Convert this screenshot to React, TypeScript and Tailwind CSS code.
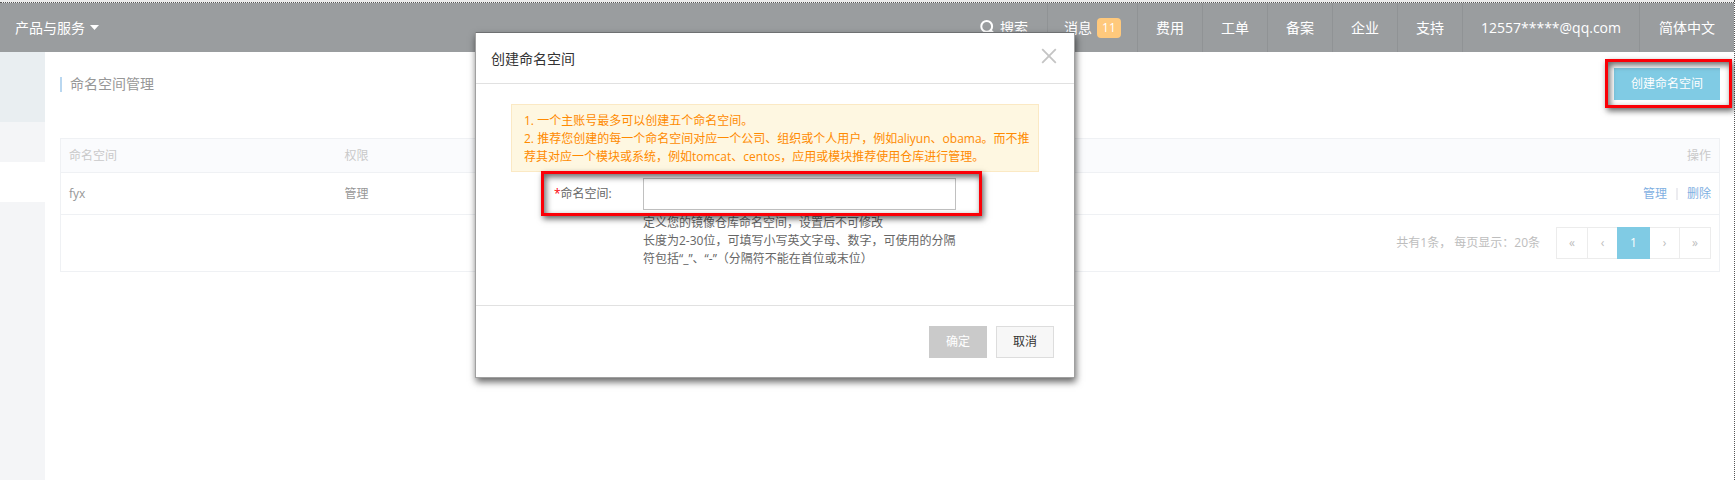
import React from "react";

const navItems = ["费用", "工单", "备案", "企业", "支持", "12557*****@qq.com"];

function Highlight({ className }: { className: string }) {
  return (
    <div
      aria-hidden="true"
      className={
        "pointer-events-none absolute border-3 border-[#fb0007] shadow-[2px_3px_6px_rgba(0,0,0,0.6),inset_2px_3px_6px_rgba(0,0,0,0.6)] " +
        className
      }
    />
  );
}

function TopBar() {
  return (
    <header>
      <div className="h-[3px] border-b border-dotted border-[#555] bg-[#ececec]" />
      <div className="flex h-[49px] items-stretch justify-between bg-[#9a9d9f] text-sm text-white">
        <button type="button" className="flex items-center gap-[5px] pl-[15px]">
          产品与服务
          <svg width="9" height="5" viewBox="0 0 9 5" aria-hidden="true">
            <path d="M0 0h9L4.5 5z" fill="#fff" />
          </svg>
        </button>
        <nav className="flex items-stretch">
          <a href="#search" className="flex items-center gap-[5px] border-r border-[#909395] px-[19px]">
            <svg width="15" height="15" viewBox="0 0 15 15" fill="none" stroke="#fff" aria-hidden="true">
              <circle cx="6.7" cy="6.4" r="5.4" strokeWidth="2" />
              <path d="M10.4 10.4l3.6 3.6" strokeWidth="2.6" />
            </svg>
            搜索
          </a>
          <a href="#messages" className="flex items-center gap-[5px] border-r border-[#909395] px-4">
            消息
            <span className="flex h-5 w-6 items-center justify-center rounded bg-[#ffc97c] text-xs">11</span>
          </a>
          {navItems.map((label) => (
            <a key={label} href="#nav" className="flex items-center border-r border-[#909395] px-[18px]">
              {label}
            </a>
          ))}
          <a href="#lang" className="flex items-center px-[19px]">
            简体中文
          </a>
        </nav>
      </div>
    </header>
  );
}

function Pagination() {
  const cell = "flex h-full items-center justify-center border-[#ececec] ";
  return (
    <div className="flex items-center justify-end gap-4 text-[#bdbdbd]">
      <span>共有1条， 每页显示：20条</span>
      <div className="flex h-8">
        <button type="button" aria-label="首页" className={cell + "w-8 border"}>«</button>
        <button type="button" aria-label="上一页" className={cell + "w-[29px] border-y"}>‹</button>
        <button type="button" className="h-full w-[33px] bg-[#80cbe4] text-white">1</button>
        <button type="button" aria-label="下一页" className={cell + "w-[29px] border-y"}>›</button>
        <button type="button" aria-label="末页" className={cell + "w-8 border"}>»</button>
      </div>
    </div>
  );
}

function NamespaceTable() {
  return (
    <table className="w-full border-collapse border border-[#eff1f4] text-left text-xs">
      <thead>
        <tr className="h-[34px] border-b border-[#eff1f4] bg-[#fafbfd] text-[#c9c9c9]">
          <th className="w-[276px] px-2 font-normal">命名空间</th>
          <th className="px-2 font-normal">权限</th>
          <th className="px-2 text-right font-normal">操作</th>
        </tr>
      </thead>
      <tbody>
        <tr className="h-[42px] border-b border-[#eff1f4] text-[#979797]">
          <td className="px-2">fyx</td>
          <td className="px-2">管理</td>
          <td className="px-2 text-[#7fb0e2]">
            <div className="flex items-center justify-end gap-[9px]">
              <a href="#manage">管理</a>
              <span className="h-3 w-[2px] bg-[#ececf0]" />
              <a href="#delete">删除</a>
            </div>
          </td>
        </tr>
      </tbody>
      <tfoot>
        <tr className="h-[57px]">
          <td colSpan={3} className="px-2">
            <Pagination />
          </td>
        </tr>
      </tfoot>
    </table>
  );
}

function CreateDialog() {
  return (
    <section
      role="dialog"
      aria-labelledby="dialog-title"
      className="absolute top-8 left-[475px] w-[600px] border border-[#a0a0a0] border-t-[#6e7072] bg-white shadow-[1px_4px_7px_rgba(0,0,0,0.6)]"
    >
      <div className="flex h-[51px] items-center justify-between border-b border-[#e1e1e1] pr-[17px] pl-[15px]">
        <h2 id="dialog-title" className="pt-[2px] text-sm text-[#333]">创建命名空间</h2>
        <button type="button" aria-label="关闭" className="pb-1">
          <svg width="16" height="16" viewBox="0 0 16 16" stroke="#c4c4c4" strokeWidth="1.8" aria-hidden="true">
            <path d="M1.2 1.2l13.6 13.6M14.8 1.2L1.2 14.8" />
          </svg>
        </button>
      </div>
      <div className="h-[222px] border-b border-[#e1e1e1] px-[35px] pt-5 text-xs leading-[18px]">
        <div className="border border-[#fbe9c4] bg-[#fef7e1] pt-[7px] pr-2 pb-[5px] pl-3 text-[#ff8a00]">
          <p>1. 一个主账号最多可以创建五个命名空间。</p>
          <p>
            2. 推荐您创建的每一个命名空间对应一个公司、组织或个人用户，例如aliyun、obama。而不推荐其对应一个模块或系统，例如tomcat、centos，应用或模块推荐使用仓库进行管理。
          </p>
        </div>
        <div className="relative mt-[6px] flex items-center pl-[43px]">
          <label htmlFor="namespace" className="w-[89px] text-[#666]">
            <span className="text-[#fb0007]">*</span>命名空间:
          </label>
          <input id="namespace" type="text" className="h-8 w-[313px] border border-[#c0c0c0] bg-white px-2 outline-none" />
          <Highlight className="-top-[7px] left-[30px] h-[45px] w-[441px]" />
        </div>
        <div className="mt-1 ml-[132px] w-[316px] text-[#666] [text-spacing-trim:space-all]">
          <p>定义您的镜像仓库命名空间，设置后不可修改</p>
          <p>长度为2-30位，可填写小写英文字母、数字，可使用的分隔符包括“_”、“-”（分隔符不能在首位或末位）</p>
        </div>
      </div>
      <div className="flex h-[71px] items-center justify-end gap-[9px] pr-5 text-xs">
        <button type="button" disabled className="h-8 w-[58px] bg-[#cacaca] text-white">确定</button>
        <button type="button" className="h-8 w-[58px] border border-[#ddd] bg-[#f7f7f7] text-[#333]">取消</button>
      </div>
    </section>
  );
}

export default function App() {
  return (
    <div className="relative flex min-h-screen flex-col border-r border-dotted border-[#555] bg-white font-['Open_Sans','Noto_Sans_CJK_SC',sans-serif]">
      <TopBar />
      <div className="flex flex-1">
        <aside className="flex w-[45px] shrink-0 flex-col bg-[#f4f5f7]">
          <div className="h-[70px] bg-[#e9eef1]" />
          <div className="mt-10 h-10 bg-white" />
        </aside>
        <main className="flex-1 pr-[14px] pl-[15px]">
          <div className="mb-[38px] flex items-center justify-between pt-4">
            <h1 className="flex items-center gap-2 text-sm text-[#979797]">
              <span className="h-[15px] w-[2px] bg-[#b9d7f0]" />
              命名空间管理
            </h1>
            <div className="relative">
              <button type="button" className="h-8 w-[106px] bg-[#80cbe4] text-xs text-white">创建命名空间</button>
              <Highlight className="-top-[9px] -left-[9px] h-[49px] w-[127px]" />
            </div>
          </div>
          <NamespaceTable />
        </main>
      </div>
      <CreateDialog />
    </div>
  );
}
